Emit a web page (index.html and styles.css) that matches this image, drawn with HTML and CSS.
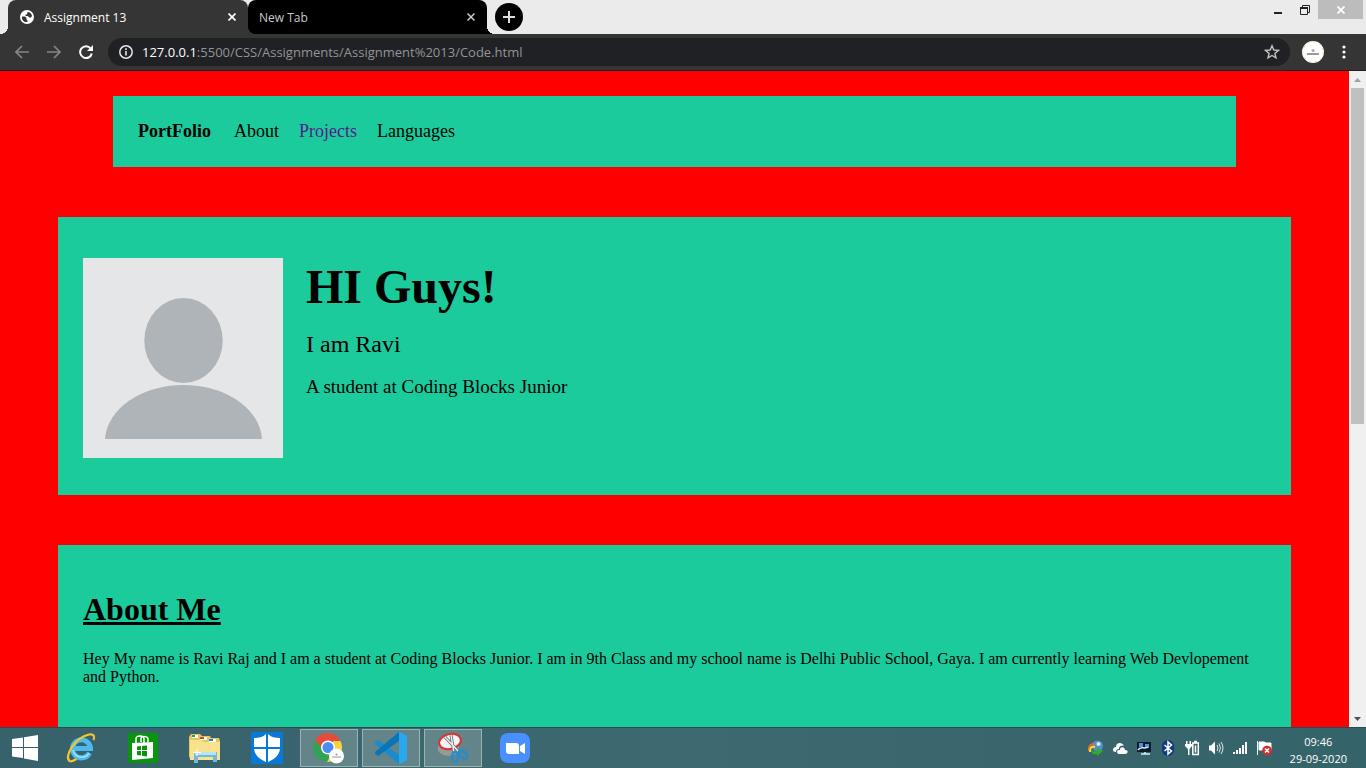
FILE: index.html
```
<!DOCTYPE html>
<html lang="en">
<head>
<meta charset="utf-8">
<title>Assignment 13</title>
<link rel="stylesheet" href="styles.css">
</head>
<body>
<div class="desktop">
  <header class="browser">
    <div class="tabstrip">
      <div class="tab tab-active">
        <svg class="favicon" viewBox="0 0 14 14"><circle cx="7" cy="7" r="7" fill="#fff"/><path d="M2 6.500h3l1.500 1.500v1.500l1 1v1.500C4 12.500 1.500 10 2 6.500zM7.500 2c2.500 0 4 1.500 4.500 4l-1 1.500H9L8 6H5.500V4.500H7z" fill="#353535"/></svg>
        <span class="tab-title">Assignment 13</span>
        <button class="icon-button" aria-label="Close Assignment 13"><svg class="close" viewBox="0 0 8 8"><path d="M0.500 0.500l7 7M7.500 0.500l-7 7" fill="none" stroke="#fff" stroke-width="1.700"/></svg></button>
      </div>
      <div class="tab tab-dark">
        <span class="tab-title">New Tab</span>
        <button class="icon-button" aria-label="Close New Tab"><svg class="close" viewBox="0 0 8 8"><path d="M0.500 0.500l7 7M7.500 0.500l-7 7" fill="none" stroke="#ccc" stroke-width="1.500"/></svg></button>
      </div>
      <button class="new-tab" aria-label="New tab"><svg width="12" height="12" viewBox="0 0 12 12"><path d="M6 0v12M0 6h12" stroke="#ddd" stroke-width="2"/></svg></button>
      <div class="window-controls">
        <button class="control" aria-label="Minimize"><svg width="8" height="10" viewBox="0 0 8 10"><path d="M0 7h8v2H0z" fill="#222"/></svg></button>
        <button class="control" aria-label="Restore"><svg width="10" height="10" viewBox="0 0 10 10"><path d="M2.500 2V.5h7v7H8" fill="none" stroke="#222"/><path d="M.5 3h7v6.500h-7z" fill="none" stroke="#222"/><path d="M0 2h8v2H0z" fill="#222"/></svg></button>
        <button class="control control-close" aria-label="Close"><svg width="8" height="8" viewBox="0 0 8 8"><path d="M.5.5l7 7M7.500.5l-7 7" stroke="#fff" stroke-width="1.800"/></svg></button>
      </div>
    </div>
    <div class="toolbar">
      <button class="icon-button" aria-label="Back"><svg width="14" height="14" viewBox="0 0 14 14"><path d="M14 7H1M7 1L1 7l6 6" fill="none" stroke="#858585" stroke-width="1.700"/></svg></button>
      <button class="icon-button" aria-label="Forward"><svg width="14" height="14" viewBox="0 0 14 14"><path d="M0 7h13M7 1l6 6-6 6" fill="none" stroke="#858585" stroke-width="1.700"/></svg></button>
      <button class="icon-button" aria-label="Reload"><svg width="14" height="14" viewBox="0 0 14 14"><path d="M11.700 3.500A5.900 5.900 0 1 0 12.800 8.500" fill="none" stroke="#fff" stroke-width="2"/><path d="M14 0v6H8z" fill="#fff"/></svg></button>
      <div class="omnibox">
        <svg width="14" height="14" viewBox="0 0 14 14"><circle cx="7" cy="7" r="6.200" fill="none" stroke="#e8e8e8" stroke-width="1.500"/><path d="M6.200 6h1.600v4.500H6.200zM6.200 3.300h1.600v1.600H6.200z" fill="#e8e8e8"/></svg>
        <span class="url"><span class="host">127.0.0.1</span>:5500/CSS/Assignments/Assignment%2013/Code.html</span>
        <button class="icon-button star" aria-label="Bookmark this page"><svg width="16" height="16" viewBox="0 0 16 16"><path d="M8 1.800l1.800 4.200 4.600.4-3.500 3 1.100 4.500L8 11.500l-4 2.400 1.100-4.500-3.500-3L6.200 6z" fill="none" stroke="#c4c4c4" stroke-width="1.400"/></svg></button>
      </div>
      <button class="icon-button profile" aria-label="Profile"><svg width="22" height="22" viewBox="0 0 22 22"><circle cx="11" cy="11" r="11" fill="#fff"/><circle cx="11" cy="11" r="10.200" fill="none" stroke="#f0c860" stroke-width="1" stroke-dasharray="2 5 1 4"/><circle cx="11" cy="9.500" r="1.500" fill="#aaa"/><path d="M5 13h12" stroke="#777" stroke-width="1.500"/></svg></button>
      <button class="icon-button" aria-label="Menu"><svg width="4" height="14" viewBox="0 0 4 14"><g fill="#fff"><circle cx="2" cy="2" r="1.600"/><circle cx="2" cy="7" r="1.600"/><circle cx="2" cy="12" r="1.600"/></g></svg></button>
    </div>
  </header>

  <div class="viewport">
    <main class="page">
      <nav class="site-nav">
        <strong class="brand">PortFolio</strong>
        <a href="#about">About</a>
        <a class="visited" href="#projects">Projects</a>
        <a href="#languages">Languages</a>
      </nav>
      <section class="card intro">
        <svg class="avatar" viewBox="0 0 200 200" role="img" aria-label="Ravi"><path d="M0 0h200v200H0z" fill="#e4e6e8"/><ellipse cx="100.500" cy="82.500" rx="39.200" ry="42.500" fill="#aeb4b7"/><path d="M22 181c2-30 36-54 78.500-54s76.500 24 78.500 54z" fill="#aeb4b7"/></svg>
        <div class="intro-text">
          <h1>HI Guys!</h1>
          <p class="name">I am Ravi</p>
          <p class="role">A student at Coding Blocks Junior</p>
        </div>
      </section>
      <section class="card about" id="about">
        <h2>About Me</h2>
        <p>Hey My name is Ravi Raj and I am a student at Coding Blocks Junior. I am in 9th Class and my school name is Delhi Public School, Gaya. I am currently learning Web Devlopement and Python.</p>
      </section>
    </main>
    <div class="scrollbar" aria-hidden="true">
      <svg class="arrow" viewBox="0 0 17 17"><path d="M5 11l3.500-4 3.500 4z" fill="#a0a0a0"/></svg>
      <div class="track"><div class="thumb"></div></div>
      <svg class="arrow" viewBox="0 0 17 17"><path d="M5 7l3.500 4L12 7z" fill="#505050"/></svg>
    </div>
  </div>

  <footer class="taskbar">
    <button class="start" aria-label="Start"><svg width="28" height="26" viewBox="0 0 28 26"><path d="M1 4l11-1.500V12H1zM13 2.300L27 0v12H13zM1 13h11v10L1 21.500zM13 13h14v13l-14-2.500z" fill="#fff"/></svg></button>
    <div class="apps">
      <button class="app" aria-label="Internet Explorer"><svg width="32" height="32" viewBox="0 0 32 32"><path d="M24.500 21A9 9 0 1 1 25.500 16.500H10" fill="none" stroke="#4db9ee" stroke-width="5"/><path d="M24 21A8.700 8.700 0 0 1 8 18" fill="none" stroke="#9fe2ff" stroke-width="1.500"/><path d="M4.500 29C-1 25 9 6 24 2.500c5-1 6 2 4.500 5.500M4.500 29c2 1 4 0 7-2" fill="none" stroke="#f7c62f" stroke-width="2.200"/></svg></button>
      <button class="app" aria-label="Store"><svg width="30" height="30" viewBox="0 0 30 30"><path d="M0 0h30v30H0z" fill="#0a930c"/><path d="M4 10l21-1v16L4 27z" fill="#fff"/><path d="M8 10V6c0-4 8-4 8 0v4M13 9V5c1-2 7-2 7 1v3" fill="none" stroke="#fff" stroke-width="1.500"/><path d="M9 13.500l4-.5v4H9zM14 13l5-.5V17h-5zM9 18h4v4.500L9 22zM14 18h5v5.500l-5-.7z" fill="#0a930c"/></svg></button>
      <button class="app" aria-label="File Explorer"><svg width="34" height="32" viewBox="0 0 34 32"><path d="M1 5l2-3h9l2 2h8l1 2h8l1 3v18H3L1 25z" fill="#e8c45f"/><path d="M4 3h6v3H4zM12 5h7v3h-7zM21 7h7v3h-7z" fill="#fff"/><path d="M4 3h3v2H4z" fill="#22a352"/><path d="M12 5h4v2h-4z" fill="#d64531"/><path d="M21 7h4v2h-4z" fill="#287fc7"/><path d="M2 8h12l2 2h16v18H2z" fill="#f8e28d"/><path d="M6 20h23v10h-4v-5H10v6H6z" fill="#72b8df"/><path d="M7 20h21v3H7z" fill="#b8e4f5"/><path d="M9 17v7M5 20.500h8" stroke="#fff" stroke-width="1"/></svg></button>
      <button class="app" aria-label="Windows Defender"><svg width="32" height="32" viewBox="0 0 32 32"><path d="M0 0h32v32H0z" fill="#0879d9"/><path d="M3 6c5 0 9-1 12-4v13H3zM17 2c3 3 7 4 12 4v9H17zM3 17h12v13C8 27 4 23 3 17zM17 17h12c-1 6-5 10-12 13z" fill="#fff"/></svg></button>
      <button class="app app-open" aria-label="Chrome"><svg width="32" height="32" viewBox="0 0 32 32"><path d="M2 8a14.500 14.500 0 0 1 25.500 1H15l-5 9z" fill="#e54b3c"/><path d="M2 8a14.500 14.500 0 0 0 12 22l6-11h-9z" fill="#31a354"/><path d="M27.500 9A14.500 14.500 0 0 1 14 30l6-11V9z" fill="#fbd33c"/><circle cx="15" cy="15.500" r="7" fill="#fff"/><circle cx="15" cy="15.500" r="5.500" fill="#4c8bf5"/><circle cx="23.500" cy="24" r="7.500" fill="#fff"/><path d="M19 25h9" stroke="#999"/><circle cx="23.500" cy="22.500" r="1" fill="#999"/></svg></button>
      <button class="app app-open" aria-label="Visual Studio Code"><svg width="32" height="32" viewBox="0 0 32 32"><path d="M24 32L0 12v-1.500L3 8l21 15z" fill="#188bd1"/><path d="M24 0L0 20v1.500L3 24 24 9z" fill="#0b73b7"/><path d="M24 0l8 3.500v25L24 32z" fill="#29a8ed"/></svg></button>
      <button class="app app-open" aria-label="Snipping Tool"><svg width="32" height="32" viewBox="0 0 32 32"><path d="M1 13v5c2 7 17 8 21 1v-7z" fill="#999"/><ellipse cx="13" cy="9.500" rx="11" ry="7.500" transform="rotate(-14 13 9.500)" fill="#f6f4f4" stroke="#d73535" stroke-width="2"/><path d="M8 5l14 15M14 3l3 18" stroke="#666" stroke-width="3"/><path d="M8 5l14 15M14 3l3 18" stroke="#eee" stroke-width="1.500"/><ellipse cx="18" cy="25" rx="3" ry="5" fill="none" stroke="#258dcc" stroke-width="2.500"/><ellipse cx="26" cy="22.500" rx="3" ry="5" transform="rotate(-45 26 22.500)" fill="none" stroke="#258dcc" stroke-width="2.500"/></svg></button>
      <button class="app" aria-label="Zoom"><svg width="30" height="30" viewBox="0 0 30 30"><rect width="30" height="30" rx="8" fill="#4a8fff"/><path d="M6 10h10q3 0 3 3v8H9q-3 0-3-3zM20 13l5-3v11l-5-3z" fill="#fff"/></svg></button>
    </div>
    <div class="tray">
      <svg viewBox="0 0 16 16"><circle cx="9.500" cy="6" r="5.500" fill="#4d91cf"/><circle cx="10.500" cy="4" r="2" fill="#d9edff"/><path d="M1 11c-1-5 2-8 6-6" fill="none" stroke="#e46b2b" stroke-width="2"/><path d="M2 12c0-4 1-6 5-5" fill="none" stroke="#f6dd38" stroke-width="2"/><path d="M3 9c2 3 4 3 6 2V8l6 3-6 5v-2c-4 1-6-1-6-5z" fill="#34ad25"/></svg>
      <svg viewBox="0 0 16 16"><path d="M1 10c0-2 1-3 3-3 0-5 6-5 8-1.500-4 0-5 1.500-5 3.500-2 0-3 1-3 3-2 0-3-1-3-2zM5 12c0-2 2-2 3-2 0-4 5-3 5 0 4 0 3 4 0 4H7c-1 0-2-1-2-2z" fill="#fff"/></svg>
      <svg viewBox="0 0 16 16"><path d="M1 2h14v10H1z" fill="#101c2c"/><path d="M3 3h4v4H3zM9 4h4v4H9z" fill="#4c94d5"/><path d="M2 10c3-5 6 0 10-3M5 14h9M9 12v2" fill="none" stroke="#d6edff" stroke-width="1.500"/></svg>
      <svg viewBox="0 0 16 16"><rect x="2" width="12" height="16" rx="6" fill="#123b7c"/><path d="M4.500 5l7 6L8 14V2l3.500 3-7 6" fill="none" stroke="#fff" stroke-width="1.500"/></svg>
      <svg viewBox="0 0 16 16"><path d="M2 1h1.500v3h2V1H7v3h1v2L5.500 9v6H4V9L1 6V4h1z" fill="#fff"/><path d="M8.800 3h5.500v11.500H8.800zM10 1.500h3M11.500 5.500v7" fill="none" stroke="#fff" stroke-width="1.500"/></svg>
      <svg viewBox="0 0 16 16"><path d="M1 5.500h2l4-4v13l-4-4H1z" fill="#fff"/><path d="M9 5q2 3 0 6M11 3.500q3 4.500 0 9M13 2q4 6 0 12" fill="none" stroke="#dde8ea"/></svg>
      <svg viewBox="0 0 16 16"><path d="M1 12h2v2H1zM4 10h2v4H4zM7 8h2v6H7zM10 5h2v9h-2zM13 2h2v12h-2z" fill="#fff"/></svg>
      <svg viewBox="0 0 16 16"><path d="M1.500 1v14M3 2h5l2 1h5v7H3z" fill="#fff" stroke="#fff"/><circle cx="11" cy="10.500" r="4.800" fill="#d82c28"/><path d="M9 8.500l4 4M13 8.500l-4 4" stroke="#fff" stroke-width="1.600"/></svg>
    </div>
    <div class="clock"><time>09:46</time><time>29-09-2020</time></div>
  </footer>
</div>
</body>
</html>
```
FILE: styles.css
```
* { box-sizing: border-box; }
body { margin: 0; background: #f00; }
button { border: 0; padding: 0; background: none; display: flex; align-items: center; justify-content: center; }
svg { display: block; flex: none; }

.desktop { display: flex; flex-direction: column; height: 100vh; overflow: hidden; }
.browser { flex: none; font: 12px "Open Sans", "Noto Sans", sans-serif; background: #353535; }
.tabstrip { display: flex; height: 34px; padding-left: 8px; background: #ebebeb; }
.tab { position: relative; display: flex; align-items: center; flex: 0 1 240px; height: 34px; padding: 0 12px; gap: 10px; border-radius: 8px 8px 0 0; }
.tab-active { background: #353535; color: #fff; }
.tab-dark { flex-basis: 239px; padding-left: 11px; background: #000; color: #c8c8c8; }
.tab::after, .tab-active::before { content: ""; position: absolute; z-index: 1; bottom: 0; width: 8px; height: 8px; }
.tab::after { left: 100%; background: radial-gradient(circle at 100% 0, transparent 8px, #353535 8px); }
.tab-dark::after { background: radial-gradient(circle at 100% 0, transparent 8px, #000 8px); }
.tab-active::before { right: 100%; background: radial-gradient(circle at 0 0, transparent 8px, #353535 8px); }
.tab-title { flex: 1; white-space: nowrap; }
.favicon { width: 14px; height: 14px; }
.close { width: 8px; height: 8px; }
.new-tab { width: 28px; height: 28px; margin: 3px 0 0 8px; border-radius: 50%; background: #000; }
.window-controls { display: flex; margin-left: auto; height: 19px; }
.control { width: 27px; }
.control-close { width: 45px; margin: 0 3px 0 0; background: #bcbcbc; }

.toolbar { display: flex; align-items: center; height: 37px; padding: 4px 20px 4px 15px; gap: 18px; border-bottom: 1px solid #202124; }
.omnibox { display: flex; flex: 1; align-items: center; align-self: stretch; gap: 9px; margin: 0 -6px 0 -3px; padding: 0 10px 0 11px; border-radius: 14px; background: #202124; color: #929497; font-size: 13px; white-space: nowrap; }
.host { color: #fff; }
.star { margin-left: auto; }

.viewport { display: flex; flex: 1; min-height: 0; }
.page { flex: 1; min-width: 0; overflow: hidden; background: #f00; color: #000; font-family: "Liberation Serif", "Times New Roman", serif; }
.site-nav { display: flex; gap: 20px; margin: 25px 113px 50px; padding: 25px 25px 26px; background: #1ccb9c; font-size: 18px; line-height: 20px; }
.site-nav a { color: #000; text-decoration: none; }
.site-nav a.visited { color: #551a8b; }
.brand { margin-right: 3px; }
.card { margin: 0 58px 50px; padding: 25px; background: #1ccb9c; }
.intro { display: flex; gap: 23px; padding: 41px 25px 37px; }
.avatar { width: 200px; height: 200px; }
h1 { margin: 0 0 14px; font-size: 48px; line-height: 58px; }
.intro-text p { margin: 0 0 18px; }
.name { font-size: 24px; line-height: 28px; }
.role { font-size: 19px; line-height: 22px; }
.about { min-height: 278px; padding-top: 46px; }
h2 { margin: 0 0 23px; font-size: 32px; line-height: 36px; text-decoration: underline; }
.about p { margin: 0; font-size: 16px; line-height: 18px; }

.scrollbar { display: flex; flex-direction: column; flex: none; width: 17px; background: #f0f0f0; }
.arrow { width: 17px; height: 17px; }
.track { flex: 1; padding: 0 2px; }
.thumb { height: 54%; background: #c0c0c0; }

.taskbar { display: flex; align-items: center; flex: none; height: 41px; padding: 0 19px 0 0; background: linear-gradient(90deg, #37616b, #3d6970 50%, #35636a); border-top: 1px solid #294c52; font: 11px "Open Sans", "Noto Sans", sans-serif; color: #fff; }
.start { width: 50px; height: 38px; margin-right: 2px; }
.apps { display: flex; gap: 4px; }
.app { width: 58px; height: 38px; }
.app-open { border: 1px solid #9cb2b5; background: #638488; }
.tray { display: flex; gap: 8px; margin-left: auto; }
.tray svg { width: 16px; height: 16px; }
.clock { display: flex; flex-direction: column; align-items: center; margin: 3px 0 0 18px; line-height: 17px; }
```
